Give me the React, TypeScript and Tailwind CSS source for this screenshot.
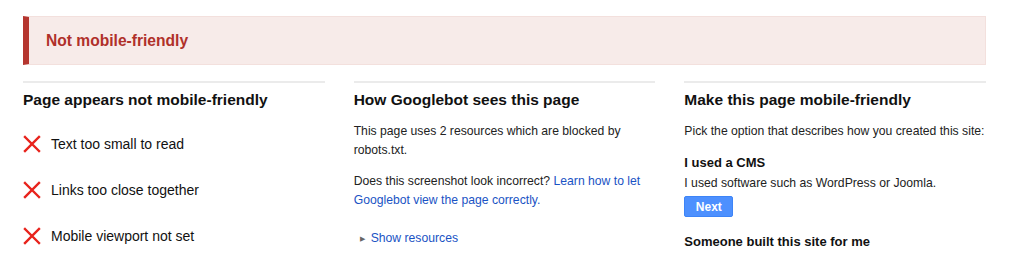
import React from 'react';

const font = { fontFamily: '"Liberation Sans", Arial, sans-serif' };

function RedX() {
  return (
    <svg width="18" height="18" viewBox="0 0 18 18" className="shrink-0">
      <path d="M2 2 L16 16 M16 2 L2 16" stroke="#e8231c" strokeWidth="2.4" strokeLinecap="square" />
    </svg>
  );
}

const issues = ['Text too small to read', 'Links too close together', 'Mobile viewport not set'];

export default function App() {
  return (
    <div className="w-[1021px] h-[256px] overflow-hidden bg-white text-[#222]" style={font}>
      <div className="mx-[23px] mt-[16px] w-[963px]">
        <div className="h-[49px] flex items-center bg-[#f7ebe9] border border-[#f3e0dd] border-l-[6px] border-l-[#b5362f] pl-[17px]">
          <span className="text-[15.6px] font-bold text-[#b0302a]">Not mobile-friendly</span>
        </div>

        <div className="mt-[16px] grid grid-cols-3 gap-x-[29px]">
          <section className="border-t-2 border-[#ebebeb]">
            <h2 className="mt-[7px] text-[15.5px] leading-[20px] font-bold text-[#111]">Page appears not mobile-friendly</h2>
            <ul className="mt-[24px] flex flex-col gap-[26px]">
              {issues.map((t) => (
                <li key={t} className="flex items-center gap-[10px] h-[20px]">
                  <RedX />
                  <span className="text-[14px] text-[#111]">{t}</span>
                </li>
              ))}
            </ul>
          </section>

          <section className="border-t-2 border-[#ebebeb]">
            <h2 className="mt-[7px] text-[15.5px] leading-[20px] font-bold text-[#111]">How Googlebot sees this page</h2>
            <p className="mt-[12px] text-[12.2px] leading-[19px]">
              This page uses 2 resources which are blocked by robots.txt.
            </p>
            <p className="mt-[12px] text-[12.2px] leading-[19px]">
              Does this screenshot look incorrect?{' '}
              <a href="#" className="text-[#1a53c4]">Learn how to let Googlebot view the page correctly.</a>
            </p>
            <div className="mt-[19px] flex items-center gap-[6px] pl-[6px] text-[12.2px] leading-[19px]">
              <span className="text-[#666] text-[7px]">▶</span>
              <a href="#" className="text-[#1a53c4]">Show resources</a>
            </div>
          </section>

          <section className="border-t-2 border-[#ebebeb]">
            <h2 className="mt-[7px] text-[15.5px] leading-[20px] font-bold text-[#111]">Make this page mobile-friendly</h2>
            <p className="mt-[12px] text-[12.2px] leading-[19px]">Pick the option that describes how you created this site:</p>
            <h3 className="mt-[12px] text-[13px] leading-[19px] font-bold text-[#111]">I used a CMS</h3>
            <p className="mt-[2px] text-[12.2px] leading-[19px]">I used software such as WordPress or Joomla.</p>
            <button className="mt-[3px] w-[49px] h-[21px] rounded-[2px] bg-[#4d90fe] border border-[#3d84f7] text-white text-[12px] font-bold">
              Next
            </button>
            <h3 className="mt-[14px] text-[13px] leading-[19px] font-bold text-[#111]">Someone built this site for me</h3>
          </section>
        </div>
      </div>
    </div>
  );
}
